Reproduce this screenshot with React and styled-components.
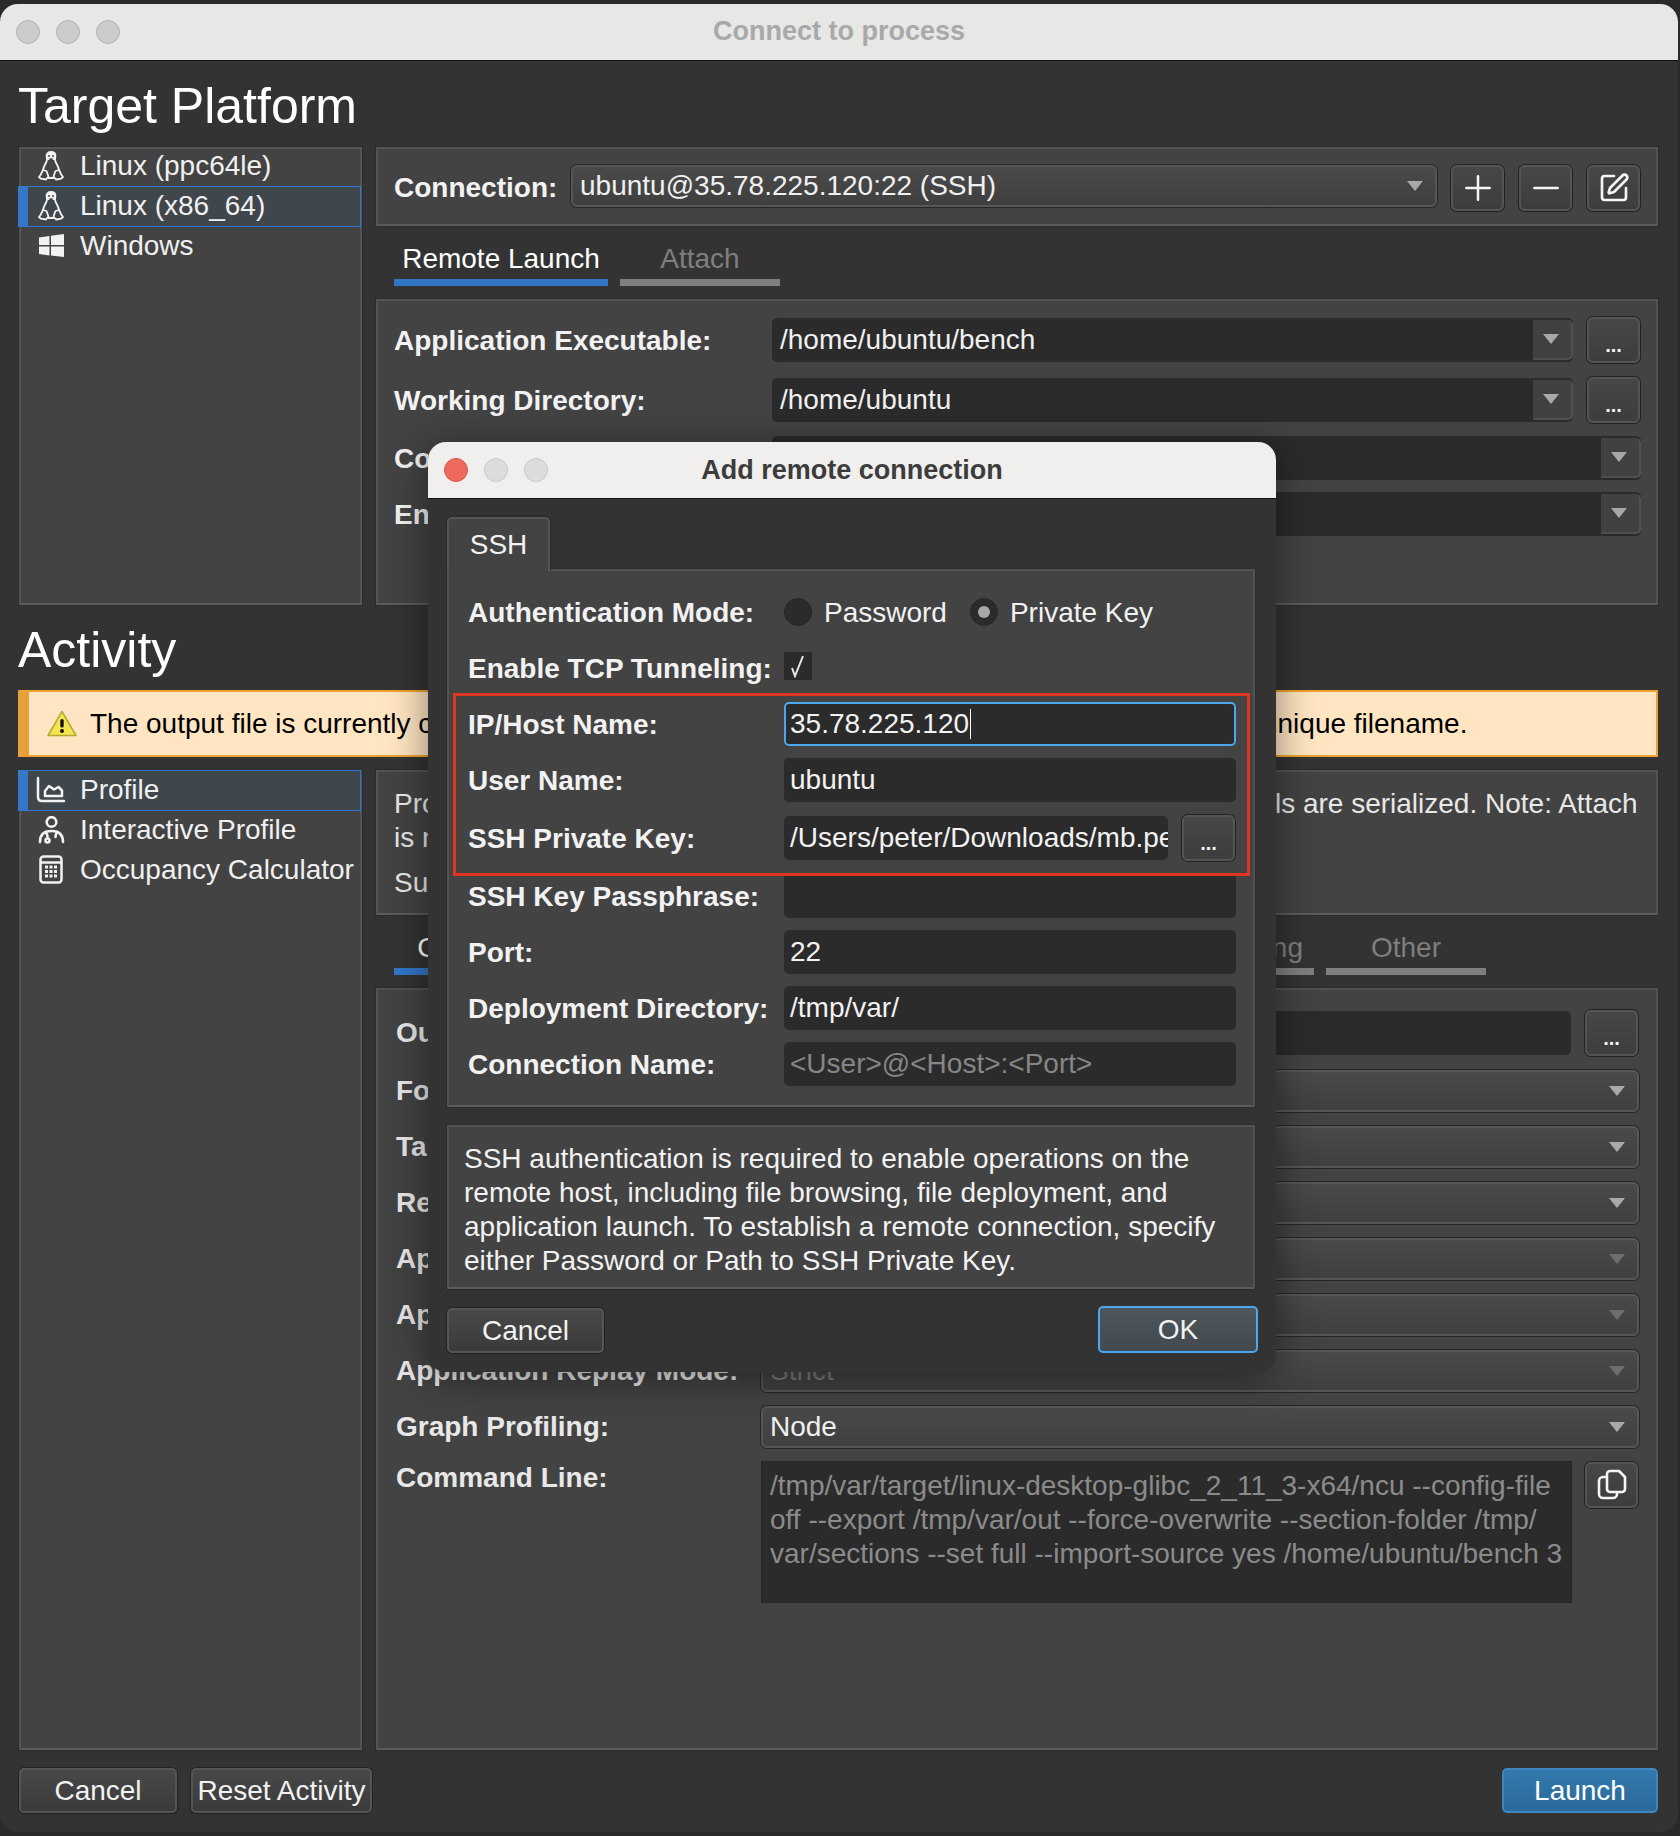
import React from 'react';
import styled, { createGlobalStyle } from 'styled-components';
import { Plus, Minus, SquarePen } from 'lucide-react';

const GlobalStyle = createGlobalStyle`
  html, body {
    margin: 0;
    padding: 0;
    background: #2a2a2a;
  }
  * {
    box-sizing: border-box;
  }
`;

const PenguinIcon = () => (
  <svg width="26" height="30" viewBox="0 0 26 30" fill="none" stroke="#f2f2f2" strokeWidth="1.800" strokeLinejoin="round">
    <path d="M9 9c0-1-.4-3-.4-4.400C8.600 2.200 10.500 1 13 1s4.400 1.200 4.400 3.600c0 1.400-.4 3.400-.4 4.400" fill="#f2f2f2" />
    <path d="M9 9c-.5 3-3 5-4 10M17 9c.5 3 3 5 4 10M10 27h6" />
    <path d="M5 19l3.500 1 2 5.500-2.500 3-5 -.8L1 26l1.500-2z" />
    <path d="M21 19l-3.500 1-2 5.500 2.500 3 5-.8L25 26l-1.500-2z" />
    <circle cx="11" cy="5" r="1" fill="#444" stroke="none" />
    <circle cx="15" cy="5" r="1" fill="#444" stroke="none" />
    <path d="M10.500 8l2.500-1 2.500 1-2.500 1.500z" fill="#444" stroke="none" />
  </svg>
);

const WindowsIcon = () => (
  <svg width="25" height="23" viewBox="0 0 25 23" fill="#f2f2f2">
    <path d="M0 3.500L10.500 2v9H0z" />
    <path d="M12 1.800L25 0v11H12z" />
    <path d="M0 12.500h10.500v9L0 20z" />
    <path d="M12 12.500h13V23l-13-1.500z" />
  </svg>
);

const ChartIcon = () => (
  <svg width="30" height="27" viewBox="0 0 30 27" fill="none" stroke="#f2f2f2" strokeWidth="2.500" strokeLinecap="round" strokeLinejoin="round">
    <path d="M2 2v19c0 2.500 1.500 4 4 4h22" />
    <path d="M9 20v-5l4-5 5 3.500 4.500-2.500 3.500 3.500V20z" />
  </svg>
);

const PersonIcon = () => (
  <svg width="27" height="28" viewBox="0 0 27 28" fill="none" stroke="#f2f2f2" strokeWidth="2.600" strokeLinecap="round">
    <circle cx="13.500" cy="6" r="4.800" />
    <path d="M2 26c0-7 4-11 11.500-11S25 19 25 26" />
    <path d="M8 16c1 2 1.500 3.500 1.500 5M19 16c-1 2-1.500 3.500-1.500 5" />
    <circle cx="9.500" cy="24.500" r="2" />
  </svg>
);

const CalcIcon = () => (
  <svg width="24" height="29" viewBox="0 0 24 29" fill="none" stroke="#f2f2f2" strokeWidth="2.500">
    <rect x="1.500" y="1.500" width="21" height="26" rx="3" />
    <path d="M2 7.500h20" />
    <path d="M6 12h3M10.500 12h3M15 12h3M6 16.500h3M10.500 16.500h3M15 16.500h3M6 21h3M10.500 21h3M15 21h3" strokeWidth="2.800" />
  </svg>
);

const WarningIcon = () => (
  <svg width="30" height="27" viewBox="0 0 30 27">
    <path d="M15 1.500L29 25.500H1z" fill="#f4e64f" stroke="#b3a838" strokeWidth="1.500" strokeLinejoin="round" />
    <rect x="13.300" y="9" width="3.400" height="8.500" rx="1.500" fill="#111" />
    <circle cx="15" cy="21" r="2" fill="#111" />
  </svg>
);

const CopyIcon = () => (
  <svg width="30" height="32" viewBox="0 0 30 32" fill="none" stroke="#f5f5f5" strokeWidth="2.600" strokeLinejoin="round">
    <path d="M10 8H6a4 4 0 0 0-4 4v13a4 4 0 0 0 4 4h10a4 4 0 0 0 4-4v-1" />
    <path d="M13 2h9l6 6v12a3 3 0 0 1-3 3H13a3 3 0 0 1-3-3V5a3 3 0 0 1 3-3z" />
  </svg>
);

const CheckIcon = () => (
  <svg width="20" height="24" viewBox="0 0 20 24" fill="none" stroke="#e8e8e8" strokeWidth="2">
    <path d="M4 14l3 8 8-20" />
  </svg>
);

const App = () => {
  return (
    <>
      <GlobalStyle />
      <Desktop>
        <Window>
          <TitleBar>
            <Lights>
              <Light />
              <Light />
              <Light />
            </Lights>
            <WindowTitle>Connect to process</WindowTitle>
          </TitleBar>

          <Content>
            <Heading $height={86}>Target Platform</Heading>
            <SplitRow $height={458}>
              <SideList>
                <SideItem><IconBox><PenguinIcon /></IconBox>Linux (ppc64le)</SideItem>
                <SideItem $active><IconBox><PenguinIcon /></IconBox>Linux (x86_64)</SideItem>
                <SideItem><IconBox><WindowsIcon /></IconBox>Windows</SideItem>
              </SideList>
              <Column>
                <ConnectionPanel>
                  <ConnectionLabel>Connection:</ConnectionLabel>
                  <Combo $grow>
                    ubuntu@35.78.225.120:22 (SSH)
                    <Arrow />
                  </Combo>
                  <IconButton><Plus size={40} strokeWidth={1.5} /></IconButton>
                  <IconButton><Minus size={40} strokeWidth={1.5} /></IconButton>
                  <IconButton><SquarePen size={32} strokeWidth={2} /></IconButton>
                </ConnectionPanel>
                <TabBar>
                  <Tab $active $width={214}>Remote Launch</Tab>
                  <Tab $width={160}>Attach</Tab>
                </TabBar>
                <FormPanel>
                  <FormRow>
                    <FieldLabel $width={378} $nudge>Application Executable:</FieldLabel>
                    <EditCombo>/home/ubuntu/bench<DropButton><Arrow /></DropButton></EditCombo>
                    <DotsButton>...</DotsButton>
                  </FormRow>
                  <FormRow>
                    <FieldLabel $width={378} $nudge>Working Directory:</FieldLabel>
                    <EditCombo>/home/ubuntu<DropButton><Arrow /></DropButton></EditCombo>
                    <DotsButton>...</DotsButton>
                  </FormRow>
                  <FormRow>
                    <FieldLabel $width={378} $nudge>Command Line Arguments:</FieldLabel>
                    <EditCombo><DropButton><Arrow /></DropButton></EditCombo>
                  </FormRow>
                  <FormRow>
                    <FieldLabel $width={378} $nudge>Environment:</FieldLabel>
                    <EditCombo><DropButton><Arrow /></DropButton></EditCombo>
                  </FormRow>
                </FormPanel>
              </Column>
            </SplitRow>

            <Heading $height={85}>Activity</Heading>
            <Banner>
              <WarningIcon />
              The output file is currently configured to overwrite existing reports on launch. Consider using a unique filename.
            </Banner>
            <SplitRow $height={980}>
              <SideList>
                <SideItem $active><IconBox><ChartIcon /></IconBox>Profile</SideItem>
                <SideItem><IconBox><PersonIcon /></IconBox>Interactive Profile</SideItem>
                <SideItem><IconBox><CalcIcon /></IconBox>Occupancy Calculator</SideItem>
              </SideList>
              <Column>
                <DescPanel>
                  <p>Profile an application to collect metrics for each kernel launched. Kernels are serialized. Note: Attach<br />is not supported for this activity.</p>
                  <p>Supported on all target platforms.</p>
                </DescPanel>
                <TabBar>
                  <Tab $active $width={160}>Common</Tab>
                  <Tab $width={160}>Filter</Tab>
                  <Tab $width={160}>Sections</Tab>
                  <Tab $width={404} $end>Profiling</Tab>
                  <Tab $width={160}>Other</Tab>
                </TabBar>
                <OptionsPanel>
                  <FormRow>
                    <FieldLabel $width={365} $dim>Output File:</FieldLabel>
                    <Input>report</Input>
                    <DotsButton>...</DotsButton>
                  </FormRow>
                  <FormRow>
                    <FieldLabel $width={365} $dim>Force Overwrite:</FieldLabel>
                    <Combo $grow>No<Arrow /></Combo>
                  </FormRow>
                  <FormRow>
                    <FieldLabel $width={365} $dim>Target Processes:</FieldLabel>
                    <Combo $grow>All<Arrow /></Combo>
                  </FormRow>
                  <FormRow>
                    <FieldLabel $width={365} $dim>Replay Mode:</FieldLabel>
                    <Combo $grow>Kernel<Arrow /></Combo>
                  </FormRow>
                  <FormRow>
                    <FieldLabel $width={365} $dim>Application Replay Iterations:</FieldLabel>
                    <Combo $grow $disabled>Auto<Arrow $disabled /></Combo>
                  </FormRow>
                  <FormRow>
                    <FieldLabel $width={365} $dim>Application Replay Buffer:</FieldLabel>
                    <Combo $grow $disabled>File<Arrow $disabled /></Combo>
                  </FormRow>
                  <FormRow>
                    <FieldLabel $width={365} $dim>Application Replay Mode:</FieldLabel>
                    <Combo $grow $disabled>Strict<Arrow $disabled /></Combo>
                  </FormRow>
                  <FormRow>
                    <FieldLabel $width={365} $dim>Graph Profiling:</FieldLabel>
                    <Combo $grow>Node<Arrow /></Combo>
                  </FormRow>
                  <CommandRow>
                    <CommandLabel>Command Line:</CommandLabel>
                    <CommandBox>
                      /tmp/var/target/linux-desktop-glibc_2_11_3-x64/ncu --config-file<br />
                      off --export /tmp/var/out --force-overwrite --section-folder /tmp/<br />
                      var/sections --set full --import-source yes /home/ubuntu/bench 3
                    </CommandBox>
                    <CopyButton><CopyIcon /></CopyButton>
                  </CommandRow>
                </OptionsPanel>
              </Column>
            </SplitRow>

            <Footer>
              <ActionButton $width={158}>Cancel</ActionButton>
              <ActionButton $width={181}>Reset Activity</ActionButton>
              <Spacer />
              <LaunchButton>Launch</LaunchButton>
            </Footer>
          </Content>

          <Dialog>
            <DialogTitleBar>
              <DialogLights>
                <DialogLight $red />
                <DialogLight />
                <DialogLight />
              </DialogLights>
              Add remote connection
            </DialogTitleBar>
            <DialogBody>
              <PaneTab>SSH</PaneTab>
              <Pane>
                <FieldRow>
                  <DialogLabel>Authentication Mode:</DialogLabel>
                  <Radio />
                  <RadioText>Password</RadioText>
                  <Radio $checked />
                  <RadioText>Private Key</RadioText>
                </FieldRow>
                <FieldRow>
                  <DialogLabel>Enable TCP Tunneling:</DialogLabel>
                  <Checkbox><CheckIcon /></Checkbox>
                </FieldRow>
                <FieldRow>
                  <DialogLabel>IP/Host Name:</DialogLabel>
                  <DialogInput $focused>35.78.225.120<Caret /></DialogInput>
                </FieldRow>
                <FieldRow>
                  <DialogLabel>User Name:</DialogLabel>
                  <DialogInput>ubuntu</DialogInput>
                </FieldRow>
                <FieldRow>
                  <DialogLabel>SSH Private Key:</DialogLabel>
                  <DialogInput>/Users/peter/Downloads/mb.pem</DialogInput>
                  <DotsButton>...</DotsButton>
                </FieldRow>
                <FieldRow>
                  <DialogLabel>SSH Key Passphrase:</DialogLabel>
                  <DialogInput />
                </FieldRow>
                <FieldRow>
                  <DialogLabel>Port:</DialogLabel>
                  <DialogInput>22</DialogInput>
                </FieldRow>
                <FieldRow>
                  <DialogLabel>Deployment Directory:</DialogLabel>
                  <DialogInput>/tmp/var/</DialogInput>
                </FieldRow>
                <FieldRow>
                  <DialogLabel>Connection Name:</DialogLabel>
                  <DialogInput $placeholder>{'<User>@<Host>:<Port>'}</DialogInput>
                </FieldRow>
                <Highlight />
              </Pane>
              <InfoBox>
                SSH authentication is required to enable operations on the<br />
                remote host, including file browsing, file deployment, and<br />
                application launch. To establish a remote connection, specify<br />
                either Password or Path to SSH Private Key.
              </InfoBox>
              <DialogFooter>
                <ActionButton $width={157}>Cancel</ActionButton>
                <OkButton>OK</OkButton>
              </DialogFooter>
            </DialogBody>
          </Dialog>
        </Window>
      </Desktop>
    </>
  );
};

export default App;

const Desktop = styled.div`
  width: 1680px;
  height: 1836px;
  padding: 4px 2px 4px 0;
  overflow: hidden;
  font-family: "Liberation Sans", Arial, sans-serif;
  font-size: 28px;
  color: #f2f2f2;
`;

const Window = styled.div`
  position: relative;
  height: 1828px;
  display: flex;
  flex-direction: column;
  background: #333333;
  border-radius: 18px;
  overflow: hidden;
`;

const TitleBar = styled.div`
  position: relative;
  height: 57px;
  flex: none;
  display: flex;
  align-items: center;
  justify-content: center;
  background: #e7e7e5;
  border-bottom: 1px solid #111;
`;

const Lights = styled.div`
  position: absolute;
  left: 16px;
  top: 16px;
  display: flex;
  gap: 16px;
`;

const Light = styled.span`
  width: 24px;
  height: 24px;
  border-radius: 50%;
  background: #cbcbc9;
  border: 1px solid #b4b4b2;
`;

const WindowTitle = styled.div`
  font-size: 27px;
  font-weight: 700;
  color: #a9a9a9;
  margin-top: -2px;
`;

const Content = styled.div`
  flex: 1;
  display: flex;
  flex-direction: column;
  padding: 0 20px 0 18px;
`;

const Heading = styled.h1`
  margin: 0;
  height: ${(p) => p.$height}px;
  flex: none;
  display: flex;
  align-items: center;
  font-size: 50px;
  font-weight: 400;
  color: #fff;
  padding-top: 4px;
`;

const SplitRow = styled.div`
  display: grid;
  grid-template-columns: 345px 1fr;
  column-gap: 13px;
  height: ${(p) => p.$height}px;
  flex: none;
`;

const Column = styled.div`
  display: flex;
  flex-direction: column;
  min-width: 0;
`;

const SideList = styled.div`
  background: #434343;
  border: 2px solid #555;
  border-bottom-color: #5c5c5c;
  margin: 0 0 0 1px;
  box-shadow: 0 0 0 1px #2c2c2c;
  width: 343px;
  display: flex;
  flex-direction: column;

  & > :first-child {
    margin-top: -2px;
  }
`;

const SideItem = styled.div`
  height: ${(p) => (p.$active ? 41 : 40)}px;
  margin: ${(p) => (p.$active ? '-1px -1px 0 -3px' : '0')};
  padding-left: ${(p) => (p.$active ? 8 : 15)}px;
  padding-bottom: ${(p) => (p.$active ? 2 : 3)}px;
  flex: none;
  display: flex;
  align-items: center;
  gap: 14px;
  white-space: nowrap;
  color: #f0f0f0;
  background: ${(p) => (p.$active ? '#3f474d' : 'transparent')};
  border: ${(p) => (p.$active ? '1px solid #2f77cf' : 'none')};
  border-left: ${(p) => (p.$active ? '10px solid #3678c8' : 'none')};
`;

const IconBox = styled.span`
  width: 30px;
  flex: none;
  display: flex;
  align-items: center;
  justify-content: center;
`;

const Panel = styled.div`
  background: #434343;
  border: 2px solid #535353;
  border-bottom-color: #5c5c5c;
  box-shadow: 0 0 0 1px #2c2c2c;
`;

const ConnectionPanel = styled(Panel)`
  height: 79px;
  flex: none;
  display: flex;
  align-items: flex-start;
  gap: 13px;
  padding: 15px 15px 0 16px;
`;

const ConnectionLabel = styled.div`
  width: 164px;
  flex: none;
  height: 44px;
  line-height: 48px;
  font-weight: 700;
`;

const Combo = styled.div`
  position: relative;
  height: 42px;
  margin: 1px 0;
  flex: ${(p) => (p.$grow ? 1 : 'none')};
  min-width: 0;
  display: flex;
  align-items: center;
  padding: 0 7px;
  color: ${(p) => (p.$disabled ? '#7a7a7a' : '#f0f0f0')};
  background: linear-gradient(#4a4a4a, #3f3f3f);
  border: 2px solid #565656;
  border-radius: 6px;
  box-shadow: 0 0 0 1px #262626;
  white-space: nowrap;
`;

const Arrow = styled.span`
  position: absolute;
  right: 12px;
  top: 50%;
  margin-top: -5px;
  width: 0;
  height: 0;
  border-left: 8px solid transparent;
  border-right: 8px solid transparent;
  border-top: 10px solid ${(p) => (p.$disabled ? '#6e6e6e' : '#a9a9a9')};
`;

const IconButton = styled.button`
  width: 53px;
  height: 46px;
  margin: 1px;
  flex: none;
  padding: 0;
  display: flex;
  align-items: center;
  justify-content: center;
  color: #f5f5f5;
  background: linear-gradient(#474747, #3d3d3d);
  border: 2px solid #545454;
  border-radius: 6px;
  box-shadow: 0 0 0 1px #222;
`;

const DotsButton = styled.button`
  width: 53px;
  height: 46px;
  margin: 1px;
  flex: none;
  padding: 10px 0 0;
  font-family: inherit;
  font-size: 20px;
  font-weight: 700;
  color: #f2f2f2;
  background: linear-gradient(#474747, #3d3d3d);
  border: 2px solid #545454;
  border-radius: 6px;
  box-shadow: 0 0 0 1px #222;
`;

const CopyButton = styled(IconButton)`
  margin-left: 13px;
`;

const TabBar = styled.div`
  height: 73px;
  flex: none;
  display: flex;
  gap: 12px;
  padding: 12px 0 13px 18px;
`;

const Tab = styled.div`
  width: ${(p) => p.$width}px;
  flex: none;
  display: flex;
  align-items: center;
  justify-content: ${(p) => (p.$end ? 'flex-end' : 'center')};
  padding-right: ${(p) => (p.$end ? 11 : 0)}px;
  color: ${(p) => (p.$active ? '#fff' : '#7f7f7f')};
  border-bottom: 7px solid ${(p) => (p.$active ? '#3276c6' : '#7f7f7f')};
`;

const FormPanel = styled(Panel)`
  flex: 1;
  display: flex;
  flex-direction: column;
  gap: 12px;
  padding: 15px 15px 0 16px;
`;

const FormRow = styled.div`
  display: flex;
  align-items: center;
  gap: 13px;
`;

const FieldLabel = styled.div`
  width: ${(p) => p.$width}px;
  margin-right: -13px;
  padding-top: ${(p) => (p.$nudge ? 2 : 0)}px;
  flex: none;
  font-weight: 700;
  white-space: nowrap;
  color: ${(p) => (p.$dim ? '#e8e8e8' : '#f2f2f2')};
`;

const EditCombo = styled.div`
  position: relative;
  flex: 1;
  height: 44px;
  display: flex;
  align-items: center;
  padding-left: 8px;
  background: #2b2b2b;
  border-radius: 5px;
  color: #f0f0f0;
`;

const DropButton = styled.span`
  position: absolute;
  right: 0;
  top: 2px;
  bottom: 2px;
  width: 40px;
  background: #414141;
  border: 2px solid #505050;
  border-radius: 0 5px 5px 0;
  border-left: none;
  border-top: none;
`;

const Banner = styled.div`
  height: 67px;
  flex: none;
  display: flex;
  align-items: center;
  gap: 13px;
  padding-left: 18px;
  margin-bottom: 13px;
  color: #000;
  background: #ffe5c1;
  border: 2px solid #efa030;
  border-left: 11px solid #e8a13a;
  white-space: nowrap;
`;

const DescPanel = styled(Panel)`
  height: 145px;
  flex: none;
  padding: 15px 16px 0;
  line-height: 34px;
  color: #e8e8e8;
  white-space: nowrap;

  p {
    margin: 0 0 11px;
  }
`;

const OptionsPanel = styled(Panel)`
  flex: 1;
  display: flex;
  flex-direction: column;
  gap: 12px;
  padding: 19px 17px 0 18px;
`;

const Input = styled.div`
  flex: 1;
  height: 44px;
  display: flex;
  align-items: center;
  padding-left: 8px;
  background: #2b2b2b;
  border-radius: 5px;
`;

const CommandRow = styled.div`
  display: flex;
  align-items: flex-start;
`;

const CommandLabel = styled.div`
  width: 365px;
  flex: none;
  font-weight: 700;
  line-height: 34px;
  color: #e8e8e8;
`;

const CommandBox = styled.div`
  flex: 1;
  height: 142px;
  padding: 7px 8px;
  line-height: 34px;
  color: #8b8b8b;
  background: #2b2b2b;
  border: 1px solid #262626;
  white-space: nowrap;
  overflow: hidden;
`;

const Footer = styled.div`
  display: flex;
  gap: 14px;
  padding: 18px 0 0 1px;
`;

const Spacer = styled.div`
  flex: 1;
`;

const ActionButton = styled.button`
  width: ${(p) => p.$width}px;
  height: 45px;
  flex: none;
  padding: 0;
  font-family: inherit;
  font-size: 28px;
  color: #f2f2f2;
  background: linear-gradient(#484848, #3b3b3b);
  border: 2px solid #555;
  border-radius: 5px;
  box-shadow: 0 0 0 1px #222;
`;

const LaunchButton = styled(ActionButton)`
  width: 156px;
  color: #fff;
  background: linear-gradient(#3279ae, #2b6a9b);
  border-color: #3d86bf;
  box-shadow: none;
`;

const Dialog = styled.div`
  position: absolute;
  left: 428px;
  top: 438px;
  width: 848px;
  height: 930px;
  display: flex;
  flex-direction: column;
  background: #333333;
  border-radius: 18px;
  box-shadow: 0 6px 40px rgba(0, 0, 0, 0.45);
  overflow: hidden;
`;

const DialogTitleBar = styled.div`
  position: relative;
  height: 57px;
  flex: none;
  display: flex;
  align-items: center;
  justify-content: center;
  font-size: 27px;
  font-weight: 700;
  color: #3c3c3c;
  background: #f0efed;
  border-bottom: 1px solid #111;
`;

const DialogLights = styled(Lights)`
  left: 16px;
`;

const DialogLight = styled.span`
  width: 24px;
  height: 24px;
  border-radius: 50%;
  background: ${(p) => (p.$red ? '#ee6a5f' : '#dcdcda')};
  border: 1px solid ${(p) => (p.$red ? '#d9564b' : '#c8c8c6')};
`;

const DialogBody = styled.div`
  flex: 1;
  display: flex;
  flex-direction: column;
  padding: 18px 21px 0 19px;
`;

const PaneTab = styled.div`
  width: 103px;
  height: 54px;
  flex: none;
  margin-bottom: -2px;
  position: relative;
  z-index: 1;
  display: flex;
  align-items: center;
  justify-content: center;
  background: #434343;
  border: 2px solid #555;
  border-bottom: none;
  border-radius: 5px 5px 0 0;
  box-shadow: 0 -1px 0 1px #2c2c2c;
`;

const Pane = styled(Panel)`
  position: relative;
  height: 538px;
  flex: none;
  display: flex;
  flex-direction: column;
  gap: 12px;
  padding: 19px 17px 0 19px;
`;

const FieldRow = styled.div`
  min-height: 44px;
  display: flex;
  align-items: center;
  gap: 13px;
`;

const DialogLabel = styled.div`
  width: 316px;
  margin-right: -13px;
  padding-top: 2px;
  flex: none;
  font-weight: 700;
  white-space: nowrap;
`;

const Radio = styled.span`
  position: relative;
  width: 28px;
  height: 28px;
  flex: none;
  margin-right: -1px;
  border-radius: 50%;
  background: #2b2b2b;
  border: 1px solid #262626;

  &::after {
    content: '';
    display: ${(p) => (p.$checked ? 'block' : 'none')};
    position: absolute;
    left: 7px;
    top: 7px;
    width: 12px;
    height: 12px;
    border-radius: 50%;
    background: #a9a9a9;
  }
`;

const RadioText = styled.span`
  margin-right: 10px;
  padding-top: 2px;
`;

const Checkbox = styled.span`
  width: 28px;
  height: 28px;
  margin-top: -4px;
  display: flex;
  align-items: center;
  justify-content: center;
  background: #2b2b2b;
`;

const DialogInput = styled.div`
  flex: 1;
  min-width: 0;
  height: 44px;
  display: flex;
  align-items: center;
  padding-left: ${(p) => (p.$focused ? 4 : 6)}px;
  background: #2b2b2b;
  border: ${(p) => (p.$focused ? '2px solid #4aa8ee' : 'none')};
  border-radius: 5px;
  color: ${(p) => (p.$placeholder ? '#868686' : '#f2f2f2')};
  white-space: nowrap;
  overflow: hidden;
`;

const Caret = styled.span`
  width: 1px;
  height: 30px;
  margin-left: 1px;
  background: #fff;
`;

const Highlight = styled.div`
  position: absolute;
  left: 4px;
  top: 122px;
  width: 797px;
  height: 183px;
  border: 3px solid #de3620;
  pointer-events: none;
`;

const InfoBox = styled(Panel)`
  height: 164px;
  flex: none;
  margin-top: 18px;
  padding: 15px 15px 0;
  line-height: 34px;
  white-space: nowrap;
`;

const DialogFooter = styled.div`
  display: flex;
  justify-content: space-between;
  align-items: flex-end;
  margin: 17px -3px 0 0;
`;

const OkButton = styled(ActionButton)`
  width: 160px;
  height: 47px;
  background: linear-gradient(#4d565b, #424a4f);
  border-color: #4aa8ee;
  box-shadow: none;
`;
